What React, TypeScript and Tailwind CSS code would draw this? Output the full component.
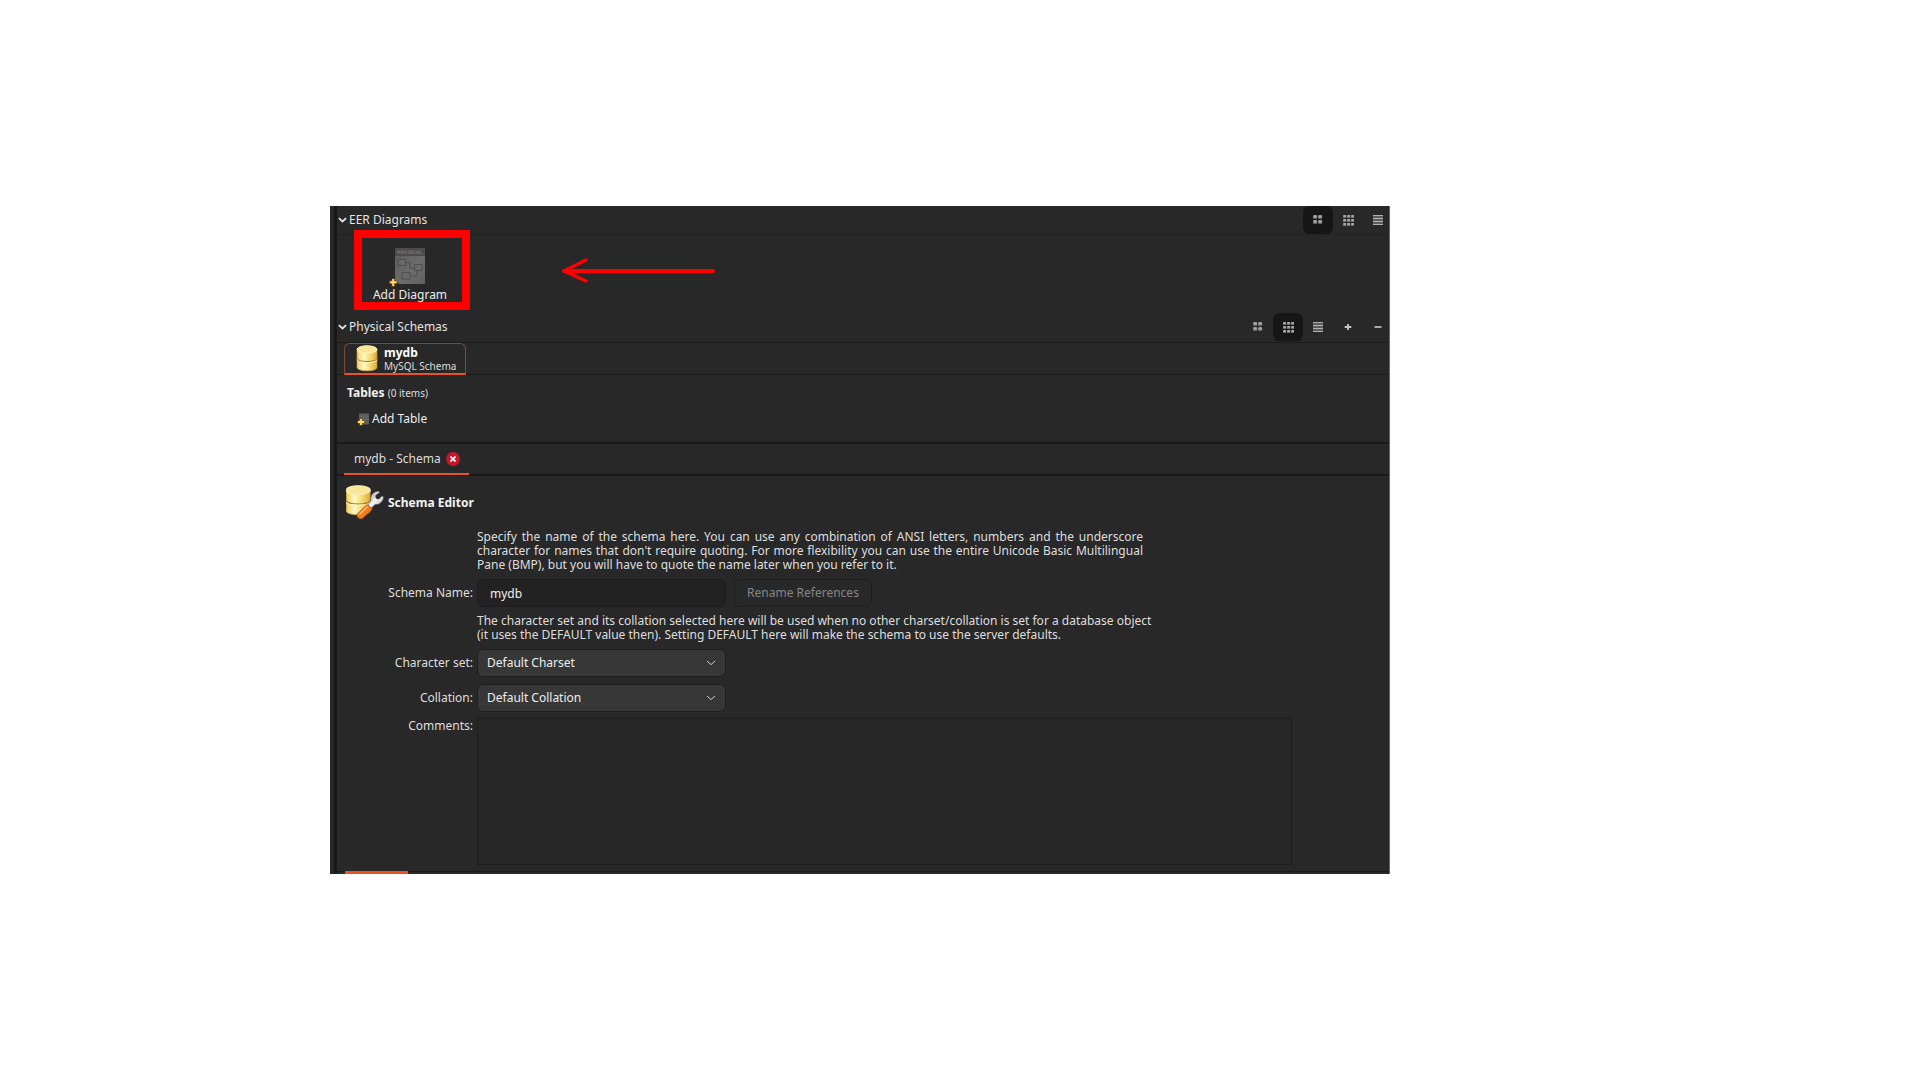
import type { ReactNode } from "react";

function Chevron({ className }: { className: string }) {
  return (
    <svg viewBox="0 0 10 6" className={className} fill="none" stroke="currentColor" aria-hidden="true">
      <path d="M1 1l4 3.6L9 1" />
    </svg>
  );
}

function SmallGridIcon() {
  const cells = [0, 5];
  return (
    <svg width="10" height="10" viewBox="0 0 10 10" aria-hidden="true">
      {cells.map((x) =>
        cells.map((y) => (
          <g key={`${x}-${y}`}>
            <rect x={x} y={y} width="4.2" height="3.8" rx="1" fill="#848484" />
            <rect x={x + 1} y={y + 0.6} width="2.6" height="1.6" fill="#b0b0b0" />
          </g>
        )),
      )}
    </svg>
  );
}

function DenseGridIcon() {
  const cells = [0, 4, 8];
  return (
    <svg width="11" height="11" viewBox="0 0 11 11" aria-hidden="true">
      {cells.map((x) =>
        cells.map((y) => (
          <g key={`${x}-${y}`}>
            <rect x={x} y={y} width="3.2" height="2.8" rx="0.6" fill="#8d8d8d" />
            <rect x={x + 0.8} y={y + 0.4} width="1.8" height="1.2" fill="#bcbcbc" />
          </g>
        )),
      )}
    </svg>
  );
}

function ListIcon() {
  return (
    <svg width="10" height="10" viewBox="0 0 10 10" aria-hidden="true">
      <rect width="10" height="10" fill="#5c5c5c" />
      <path d="M0 0.500h10M0 3.500h10M0 6.500h10M0 9.500h10" stroke="#b0b0b0" strokeWidth="1" />
    </svg>
  );
}

function PlusIcon() {
  return (
    <svg width="8" height="8" viewBox="0 0 8 8" stroke="#c4c4c4" strokeWidth="1.8" aria-hidden="true">
      <path d="M4 1v6M0.7 4h6.6" />
    </svg>
  );
}

function MinusIcon() {
  return (
    <svg width="8" height="8" viewBox="0 0 8 8" stroke="#b8b8b8" strokeWidth="1.8" aria-hidden="true">
      <path d="M0.5 4h7" />
    </svg>
  );
}

function DiagramIcon() {
  return (
    <svg width="38" height="40" viewBox="0 0 38 40" aria-hidden="true">
      <defs>
        <linearGradient id="sheet" x1="0" y1="0" x2="1" y2="1">
          <stop offset="0" stopColor="#5a5a5a" />
          <stop offset="0.6" stopColor="#6c6c6c" />
          <stop offset="1" stopColor="#606060" />
        </linearGradient>
      </defs>
      <path d="M6 1h30v36H10L6 33z" fill="url(#sheet)" />
      <rect x="6" y="1" width="30" height="8" fill="#4c4c4c" />
      <text x="21" y="7" textAnchor="middle" fontSize="5" fontWeight="700" fontFamily="Liberation Sans" fill="#7a7a7a" textRendering="geometricPrecision">
        PHYSICAL
      </text>
      <g fill="#6a6a6a" stroke="#4e4e4e" strokeWidth="1">
        <path d="M16 15.500h5v6M21 21.500h5M28 23v6h-7" fill="none" />
        <rect x="9" y="12.500" width="7.500" height="6" />
        <rect x="25.500" y="17.500" width="7.500" height="6" />
        <rect x="13" y="25.500" width="8" height="6.500" />
      </g>
      <path d="M4.200 31.500v8M0.500 35.200h7.500" stroke="#8a5a10" strokeWidth="3" />
      <path d="M4.200 32v7M0.900 35.200h6.700" stroke="#ffdc6a" strokeWidth="1.900" />
    </svg>
  );
}

function Cylinder() {
  return (
    <>
      <path d="M1 4.500v18c0 4.500 20 4.500 20 0v-18z" fill="url(#gold)" stroke="#c79a33" strokeWidth="0.6" />
      <path d="M1 13.500c0 4 20 4 20 0" fill="none" stroke="#9c7a2c" strokeWidth="1" />
      <path d="M1 14.600c0 4 20 4 20 0" fill="none" stroke="#fff6c6" strokeWidth="0.900" />
      <ellipse cx="11" cy="4.500" rx="10" ry="3.800" fill="#fbe596" stroke="#fff3bd" strokeWidth="0.900" />
    </>
  );
}

function GoldGradient() {
  return (
    <linearGradient id="gold">
      <stop offset="0" stopColor="#f0cf60" />
      <stop offset="0.35" stopColor="#fff7c4" />
      <stop offset="0.65" stopColor="#f7dc70" />
      <stop offset="1" stopColor="#d9a93c" />
    </linearGradient>
  );
}

function DatabaseIcon() {
  return (
    <svg width="22" height="27" viewBox="0 0 22 27" aria-hidden="true">
      <defs>
        <GoldGradient />
      </defs>
      <Cylinder />
    </svg>
  );
}

function SchemaEditorIcon() {
  return (
    <svg width="38" height="36" viewBox="0 0 38 36" aria-hidden="true">
      <defs>
        <linearGradient id="steel" x1="0" y1="0" x2="1" y2="1">
          <stop offset="0" stopColor="#8e8e8e" />
          <stop offset="0.5" stopColor="#f4f4f4" />
          <stop offset="1" stopColor="#a8a8a8" />
        </linearGradient>
      </defs>
      <g transform="translate(-1 1) scale(1.200 1.150)">
        <Cylinder />
      </g>
      <path
        d="M22 21.500l3-5c-1-5 2-9 7.500-9.200l1 1.200-3.500 2.500c-1.200 2.500 0.500 4.500 3 4l3-3 1.400 0.800c0 5-4 8.200-8.400 7.700L25.500 24z"
        fill="url(#steel)"
        stroke="#5d5d5d"
        strokeWidth="0.500"
      />
      <path d="M21 20.500l5.500 4.500-9.500 9c-3 2.500-7.500-1-5.500-4.500z" fill="#ee7d22" stroke="#b04f0c" strokeWidth="0.600" />
      <path d="M21.500 22.500l-8 8" stroke="#ffb877" strokeWidth="1.600" />
    </svg>
  );
}

function AddTableIcon() {
  return (
    <svg width="13" height="13" viewBox="0 0 13 13" aria-hidden="true">
      <rect x="2" y="0.500" width="10" height="11" fill="#5b5b5b" />
      <path d="M2 3.500h10M2 6.500h10M5.500 1v10M9 1v10" stroke="#6b6b6b" strokeWidth="0.600" />
      <path d="M4 5.500v7M0.500 9h7" stroke="#8a5a10" strokeWidth="3" />
      <path d="M4 6v6M1 9h6" stroke="#ffdc6a" strokeWidth="1.800" />
    </svg>
  );
}

function ToolButton({ label, active, children }: { label: string; active?: boolean; children: ReactNode }) {
  return (
    <button
      type="button"
      aria-label={label}
      className={`flex h-7 w-[30px] items-center justify-center rounded-md ${active ? "bg-[#161616]" : ""}`}
    >
      {children}
    </button>
  );
}

function SectionHeader({ title, children }: { title: string; children: ReactNode }) {
  return (
    <header className="flex h-7 items-center justify-between pl-px">
      <button type="button" className="flex items-center gap-[2px] text-[#e4e4e4]">
        <Chevron className="h-[6px] w-[9px] stroke-2" />
        {title}
      </button>
      <div className="-mr-1 flex">{children}</div>
    </header>
  );
}

function Dropdown({ id, value }: { id: string; value: string }) {
  return (
    <div className="relative w-[249px]">
      <select
        id={id}
        className="h-7 w-full appearance-none rounded-md border border-[#1e1e1e] bg-[#373737] px-[9px] text-[#ededed]"
      >
        <option>{value}</option>
      </select>
      <Chevron className="pointer-events-none absolute top-[11px] right-[10px] h-[6px] w-[10px] text-[#cfcfcf]" />
    </div>
  );
}

export default function App() {
  return (
    <div className="min-h-screen bg-white pt-[206px] pr-[530px] pl-[330px] font-['Noto_Sans',sans-serif] text-[12px] leading-4 text-[#dedede]">
      <main className="flex overflow-hidden border-r border-[#666] bg-[#282828]">
        <div className="w-1 shrink-0" />
        <div className="w-[3px] shrink-0 bg-[#181818]" />
        <div className="min-w-0 flex-1">
          <section>
            <SectionHeader title="EER Diagrams">
              <ToolButton label="Large icons" active>
                <SmallGridIcon />
              </ToolButton>
              <ToolButton label="Small icons">
                <DenseGridIcon />
              </ToolButton>
              <ToolButton label="List">
                <ListIcon />
              </ToolButton>
            </SectionHeader>
            <div className="flex h-[79px] items-start border-t border-[#222] pl-[27px]">
              <button type="button" className="relative flex w-[92px] flex-col items-center pt-3 text-[#ececec]">
                <span className="pr-1">
                  <DiagramIcon />
                </span>
                <span className="whitespace-nowrap">Add Diagram</span>
                <span className="absolute -top-[5px] -right-[14px] -left-[10px] h-[80px] border-8 border-[#fe0000]" />
              </button>
              <svg width="155" height="26" viewBox="0 0 155 26" className="mt-[23px] ml-[105px]" fill="none" stroke="#fe0000" strokeLinecap="round" strokeLinejoin="round" aria-hidden="true">
                <path d="M3 13h149" strokeWidth="4" />
                <path d="M25 2L3 13l22 10" strokeWidth="3.400" />
              </svg>
            </div>
          </section>

          <section>
            <SectionHeader title="Physical Schemas">
              <ToolButton label="Large icons">
                <SmallGridIcon />
              </ToolButton>
              <ToolButton label="Small icons" active>
                <DenseGridIcon />
              </ToolButton>
              <ToolButton label="List">
                <ListIcon />
              </ToolButton>
              <ToolButton label="Add schema">
                <PlusIcon />
              </ToolButton>
              <ToolButton label="Remove schema">
                <MinusIcon />
              </ToolButton>
            </SectionHeader>
            <div className="mt-px flex h-[33px] items-end border-y border-[#1b1b1b] pl-[7px]">
              <button
                type="button"
                className="-mb-px flex h-[32px] w-[122px] items-center gap-[6px] rounded-t-md border border-b-2 border-[#7d4a3c] border-b-[#e95420] pl-[11px] text-left"
              >
                <DatabaseIcon />
                <span className="flex flex-col whitespace-nowrap">
                  <strong className="leading-[14px] text-white">mydb</strong>
                  <span className="text-[10px] leading-3">MySQL Schema</span>
                </span>
              </button>
            </div>
            <div className="h-[67px] pt-[10px] pl-[10px]">
              <h2>
                <strong className="text-[#f0f0f0]">Tables</strong> <span className="text-[10px]">(0 items)</span>
              </h2>
              <button type="button" className="mt-[10px] ml-[10px] flex items-center gap-[2px] text-[#ececec]">
                <AddTableIcon />
                Add Table
              </button>
            </div>
          </section>

          <section>
            <div className="flex h-[34px] border-y-2 border-[#1a1a1a] pl-[7px]">
              <div className="-mb-px flex w-[125px] items-center justify-between border-b-2 border-[#e95420] pt-px pr-[9px] pl-[10px]">
                <span className="whitespace-nowrap">mydb - Schema</span>
                <button type="button" aria-label="Close tab" className="flex size-[14px] items-center justify-center rounded-full bg-[#c7162b]">
                  <svg width="6" height="6" viewBox="0 0 6 6" stroke="#fff" strokeWidth="1.600" aria-hidden="true">
                    <path d="M0.500 0.500l5 5M5.500 0.500l-5 5" />
                  </svg>
                </button>
              </div>
            </div>

            <div className="flex items-center gap-1 pt-2 pl-[9px]">
              <SchemaEditorIcon />
              <h1 className="pt-px font-bold text-[#f2f2f2]">Schema Editor</h1>
            </div>

            <form className="grid grid-cols-[136px_1fr] gap-x-1 pt-[10px] pb-[6px]">
              <p className="col-start-2 w-[666px] text-justify leading-[14px]">
                Specify the name of the schema here. You can use any combination of ANSI letters, numbers and the underscore
                character for names that don't require quoting. For more flexibility you can use the entire Unicode Basic
                Multilingual Pane (BMP), but you will have to quote the name later when you refer to it.
              </p>

              <label htmlFor="schema-name" className="mt-[7px] self-center text-right">
                Schema Name:
              </label>
              <div className="mt-[7px] flex gap-2">
                <input
                  id="schema-name"
                  type="text"
                  defaultValue="mydb"
                  className="h-7 w-[249px] rounded-md border border-[#1c1c1c] bg-[#222] px-3 text-[#f0f0f0]"
                />
                <button type="button" disabled className="h-7 w-[138px] rounded-md border border-[#1e1e1e] text-[#868686]">
                  Rename References
                </button>
              </div>

              <p className="col-start-2 mt-[7px] leading-[14px] whitespace-nowrap">
                The character set and its collation selected here will be used when no other charset/collation is set for a database object
                <br />
                (it uses the DEFAULT value then). Setting DEFAULT here will make the schema to use the server defaults.
              </p>

              <label htmlFor="charset" className="mt-[7px] self-center text-right">
                Character set:
              </label>
              <div className="mt-[7px]">
                <Dropdown id="charset" value="Default Charset" />
              </div>

              <label htmlFor="collation" className="mt-[7px] self-center text-right">
                Collation:
              </label>
              <div className="mt-[7px]">
                <Dropdown id="collation" value="Default Collation" />
              </div>

              <label htmlFor="comments" className="mt-[6px] text-right">
                Comments:
              </label>
              <textarea
                id="comments"
                className="mt-[6px] mr-[97px] block h-[147px] resize-none border border-[#1d1d1d] bg-[#272727] p-1"
              />
            </form>
            <div className="flex h-[3px] border-t border-[#1a1a1a] pl-2">
              <div className="-mt-px h-[3px] w-[63px] bg-[#e95420]" />
            </div>
          </section>
        </div>
      </main>
    </div>
  );
}
